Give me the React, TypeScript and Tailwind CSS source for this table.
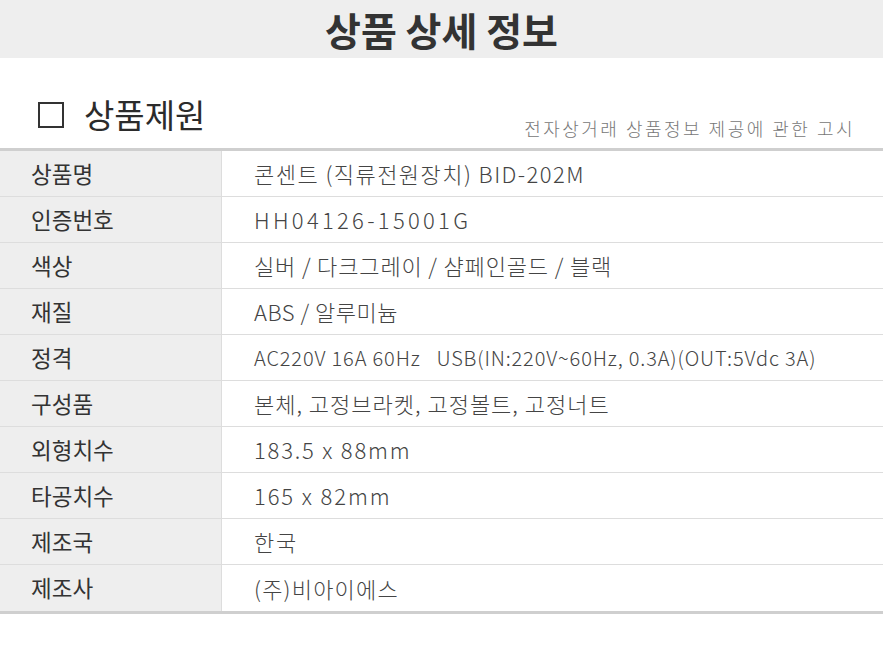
import React from "react";

const rows: { label: string; value: string; cls: string }[] = [
  { label: "상품명", value: "콘센트 (직류전원장치) BID-202M", cls: "text-[22px] tracking-[1.45px]" },
  { label: "인증번호", value: "HH04126-15001G", cls: "text-[22px] tracking-[3.3px]" },
  { label: "색상", value: "실버 / 다크그레이 / 샴페인골드 / 블랙", cls: "text-[22px] tracking-[0.85px]" },
  { label: "재질", value: "ABS / 알루미늄", cls: "text-[22px] tracking-[0.5px]" },
  {
    label: "정격",
    value: "AC220V 16A 60Hz\u00a0\u00a0 USB(IN:220V~60Hz, 0.3A)(OUT:5Vdc 3A)",
    cls: "text-[20px] tracking-[0.85px]",
  },
  { label: "구성품", value: "본체, 고정브라켓, 고정볼트, 고정너트", cls: "text-[22px] tracking-[1px]" },
  { label: "외형치수", value: "183.5 x 88mm", cls: "text-[22px] tracking-[1.8px]" },
  { label: "타공치수", value: "165 x 82mm", cls: "text-[22px] tracking-[1.9px]" },
  { label: "제조국", value: "한국", cls: "text-[22px] tracking-[1.7px]" },
  { label: "제조사", value: "(주)비아이에스", cls: "text-[22px] tracking-[1.2px]" },
];

const App = () => {
  return (
    <div className="w-[883px] h-[650px] bg-white font-['Noto_Sans_CJK_KR','Noto_Sans',sans-serif] text-[#333]">
      <div className="h-[58px] bg-[#eeeeee] flex items-center justify-center">
        <span className="text-[39px] font-semibold text-[#333] leading-none">상품 상세 정보</span>
      </div>

      <div className="h-[90px] flex justify-between items-end px-[38px] pb-[9px] pr-[28px]">
        <div className="flex items-center gap-[20px] mb-[8px]">
          <span className="block w-[26px] h-[26px] border-2 border-[#333]" />
          <span className="text-[33px] leading-none text-[#2b2b2b]">상품제원</span>
        </div>
        <span className="text-[18px] leading-none text-[#777] font-light tracking-[2.5px] mb-[2px]">
          전자상거래 상품정보 제공에 관한 고시
        </span>
      </div>

      <div className="border-t-[3px] border-b-[3px] border-[#cfcfcf]">
        {rows.map((r, i) => (
          <div
            key={r.label}
            className={`flex h-[46px] ${i < rows.length - 1 ? "border-b border-[#dddddd]" : ""}`}
          >
            <div className="w-[222px] bg-[#eeeeee] border-r border-[#dddddd] flex items-center pl-[31px] text-[22.5px] text-[#333]">
              {r.label}
            </div>
            <div className={`flex-1 flex items-center pl-[32px] font-light text-[#444] whitespace-nowrap ${r.cls}`}>
              {r.value}
            </div>
          </div>
        ))}
      </div>
    </div>
  );
};

export default App;
